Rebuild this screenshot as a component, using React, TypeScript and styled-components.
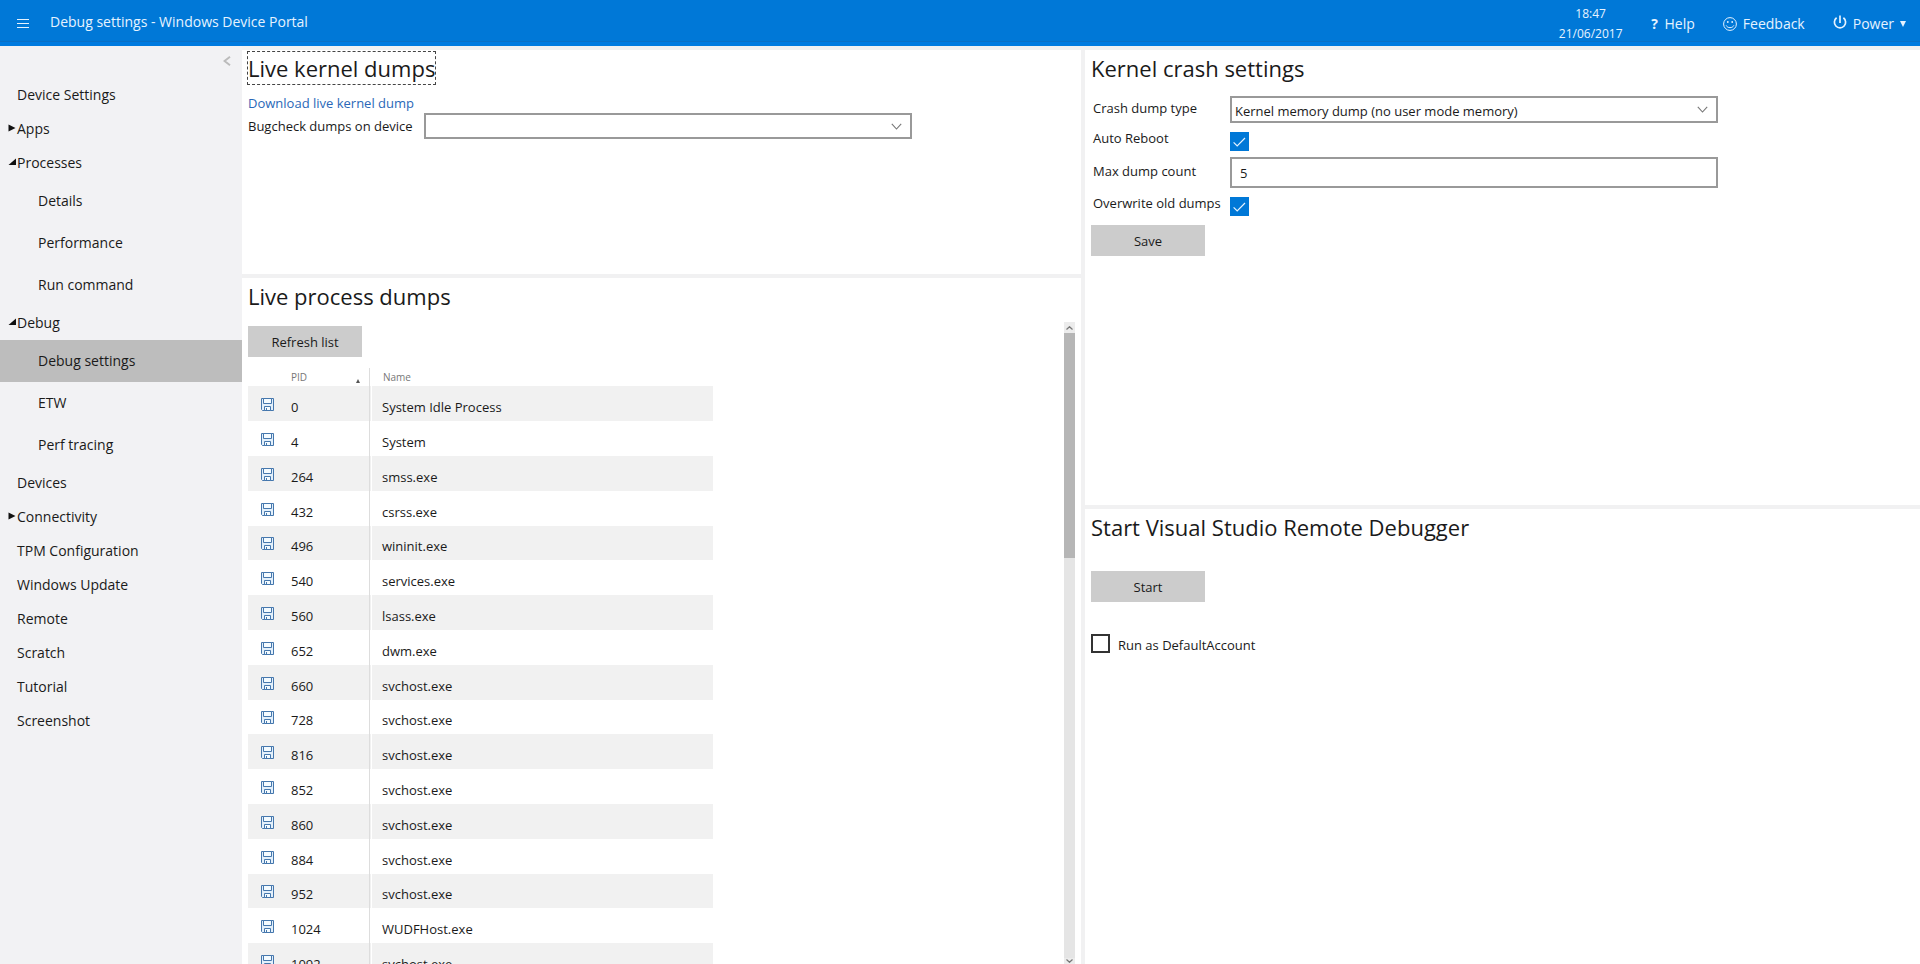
import React, { useId, useState } from 'react';
import styled, { createGlobalStyle } from 'styled-components';

const GlobalStyle = createGlobalStyle`
  *, *::before, *::after { box-sizing: border-box; }
  body {
    margin: 0;
    background: #fff;
    color: #1a1a1a;
    font-family: "Open Sans", "Noto Sans", sans-serif;
    font-size: 13px;
    line-height: 20px;
  }
  button, input, select { font: inherit; color: inherit; }
`;

const Page = styled.div`
  display: flex;
  flex-direction: column;
  height: 100vh;
  overflow: hidden;
`;

/* ---------- header ---------- */

const Header = styled.header`
  flex: none;
  padding-bottom: 4px;
  background: #007be0;
`;

const HeaderBar = styled.div`
  display: flex;
  align-items: center;
  height: 42px;
  padding: 0 14px 0 17px;
  border-bottom: 1px solid #0a70c6;
  background: #0078d7;
  color: #e6f3ff;
  font-size: 14px;
`;

const IconButton = styled.button`
  display: flex;
  padding: 0;
  border: 0;
  background: none;
  cursor: pointer;
`;

const MenuButton = styled(IconButton)`
  margin: 6px 21px 0 0;
`;

const Title = styled.h1`
  flex: 1;
  margin: 0;
  padding-top: 2px;
  font-size: 14px;
  font-weight: 400;
`;

const HeaderTools = styled.div`
  display: flex;
  align-items: center;
  gap: 28px;
  padding-top: 7px;
`;

const Clock = styled.time`
  font-size: 12px;
  text-align: center;
`;

const ClockLine = styled.span`
  display: block;
`;

const ToolButton = styled(IconButton)`
  align-items: center;
  gap: 6px;
`;

const HelpMark = styled.b`
  width: 8px;
`;

/* ---------- sidebar ---------- */

const Body = styled.div`
  display: flex;
  flex: 1;
  min-height: 0;
`;

const Sidebar = styled.nav`
  flex: none;
  width: 242px;
  background: #f2f2f4;
  font-size: 14px;
`;

const CollapseRow = styled.div`
  display: flex;
  justify-content: flex-end;
  height: 32px;
  padding: 10px 11px 0 0;
`;

const NavList = styled.ul`
  margin: 0;
  padding: 0;
  list-style: none;
`;

const NavLink = styled.a<{ $sub?: boolean; $active?: boolean }>`
  display: flex;
  align-items: center;
  height: ${p => (p.$sub ? 42 : 34)}px;
  padding-left: ${p => (p.$sub ? 38 : 8)}px;
  background: ${p => (p.$active ? '#bdbdbd' : 'transparent')};
  color: inherit;
  text-decoration: none;
`;

const Marker = styled.span`
  display: flex;
  width: 9px;
  padding-bottom: 3px;
`;

/* ---------- panels ---------- */

const Main = styled.main`
  display: grid;
  flex: 1;
  grid-template-columns: 50% minmax(0, 1fr);
  column-gap: 4px;
  min-width: 0;
  padding-top: 4px;
  background: #f1f1f2;
`;

const LeftColumn = styled.div`
  display: grid;
  grid-template-rows: 224px minmax(0, 1fr);
  row-gap: 4px;
  min-height: 0;
`;

const RightColumn = styled.div`
  display: grid;
  grid-template-rows: 1fr 1fr;
  row-gap: 4px;
  min-height: 0;
`;

const Panel = styled.section`
  display: flex;
  flex-direction: column;
  align-items: flex-start;
  min-height: 0;
  padding: 2px 6px 0;
  background: #fff;
`;

const Heading = styled.h2<{ $focused?: boolean }>`
  margin: 0 0 10px;
  font-size: 22px;
  font-weight: 400;
  line-height: 32px;
  outline: ${p => (p.$focused ? '1px dashed #444' : 'none')};
`;

const DownloadLink = styled.a`
  color: #2a68b8;
  line-height: 19px;
  text-decoration: none;
`;

const BugcheckRow = styled.div`
  display: grid;
  grid-template-columns: 176px 1fr;
  align-items: center;
`;

const PushButton = styled.button`
  flex: none;
  width: 114px;
  height: 31px;
  padding: 0;
  border: 0;
  background: #ccc;
`;

/* ---------- form controls ---------- */

const SelectWrap = styled.span`
  display: grid;
  align-items: center;
  width: 488px;
  max-width: 100%;
  svg { grid-area: 1 / 1; justify-self: end; margin-right: 10px; pointer-events: none; }
`;

const SelectBox = styled.select<{ $tall?: boolean }>`
  grid-area: 1 / 1;
  width: 100%;
  height: ${p => (p.$tall ? 27 : 26)}px;
  padding: 3px 28px 0 3px;
  border: 2px solid #999;
  border-radius: 0;
  background: #fff;
  appearance: none;
`;

const TextInput = styled.input`
  width: 488px;
  max-width: 100%;
  height: 31px;
  padding: 1px 8px 0;
  border: 2px solid #999;
  border-radius: 0;
  background: #fff;
`;

const CheckWrap = styled.span`
  display: grid;
  width: 19px;
  height: 19px;
  svg { grid-area: 1 / 1; place-self: center; pointer-events: none; }
`;

const CheckInput = styled.input`
  grid-area: 1 / 1;
  width: 19px;
  height: 19px;
  margin: 0;
  border: 2px solid #333;
  background: #fff;
  appearance: none;
  &:checked { border-color: #0078d7; background: #0078d7; }
`;

const SettingsGrid = styled.div`
  display: grid;
  grid-template-columns: 137px minmax(0, 488px);
  align-items: center;
  row-gap: 5px;
  padding: 2px 0 8px 2px;
`;

const SettingLabel = styled.label`
  padding-bottom: 4px;
`;

const CheckCell = styled.div`
  padding: 4px 0 1px;
`;

const StartBlock = styled.div`
  padding-top: 18px;
`;

const RunAsRow = styled.div`
  display: flex;
  align-items: center;
  gap: 8px;
  padding-top: 30px;
`;

const RunAsLabel = styled.label`
  padding-top: 3px;
`;

/* ---------- process table ---------- */

const ScrollArea = styled.div`
  display: flex;
  flex: 1;
  width: 100%;
  min-height: 0;
`;

const ScrollContent = styled.div`
  flex: 1;
  padding-top: 4px;
  overflow: hidden;
`;

const Table = styled.table`
  width: 465px;
  margin-top: 11px;
  border-spacing: 0;
  table-layout: fixed;
`;

const IconCol = styled.col`width: 43px;`;
const PidCol = styled.col`width: 79px;`;

const HeadRow = styled.tr`
  height: 18px;
  color: #777;
  font-size: 10px;
  line-height: 18px;
`;

const HeadCell = styled.th<{ $kind?: 'pid' | 'name' }>`
  padding: 0 0 0 ${p => (p.$kind === 'name' ? 13 : 0)}px;
  border-right: ${p => (p.$kind === 'pid' ? '1px solid #ddd' : '0')};
  font-weight: 400;
  text-align: left;
`;

const SortHead = styled.div`
  display: flex;
  align-items: center;
  justify-content: space-between;
  padding-right: 9px;
  svg { margin-top: 8px; }
`;

const ProcessRow = styled.tr`
  height: 35px;
  &:nth-child(odd) { background: #f1f1f1; }
  &:nth-child(5n) { height: 34px; }
`;

const IconCell = styled.td`
  padding: 2px 0 0 13px;
`;

const PidCell = styled.td`
  padding: 6px 0 0;
  border-right: 1px solid #ddd;
`;

const NameCell = styled.td`
  padding: 6px 0 0 12px;
  background: linear-gradient(#fff, #fff) 1px 0 / 1px 100% no-repeat;
`;

const Scrollbar = styled.div`
  display: flex;
  flex: none;
  flex-direction: column;
  width: 11px;
  background: #e5e5e5;
`;

const ScrollArrow = styled.button<{ $end?: boolean }>`
  display: flex;
  flex: none;
  align-items: center;
  justify-content: center;
  height: ${p => (p.$end ? 6 : 11)}px;
  padding: 0;
  border: 0;
  background: #ececec;
`;

const ScrollTrack = styled.div`
  flex: 1;
`;

const ScrollThumb = styled.div`
  height: 36%;
  background: #b6b6b6;
`;

/* ---------- icons ---------- */

const MenuIcon = () => (
  <svg width="12" height="9" viewBox="0 0 12 9" fill="#e6f3ff">
    <path d="M0 0h12v1H0zM0 4h12v1H0zM0 8h12v1H0z" />
  </svg>
);

const SmileIcon = () => (
  <svg width="14" height="14" viewBox="0 0 14 14" fill="none" stroke="#e6f3ff" strokeWidth="1">
    <circle cx="7" cy="7" r="6.4" />
    <path d="M3.2 8.4c1.1 3 6.5 3 7.6 0" />
    <circle cx="4.8" cy="5" r="0.9" fill="#e6f3ff" stroke="none" />
    <circle cx="9.2" cy="5" r="0.9" fill="#e6f3ff" stroke="none" />
  </svg>
);

const PowerIcon = () => (
  <svg width="14" height="18" viewBox="0 0 14 18" fill="none" stroke="#e6f3ff" strokeWidth="1.7">
    <path d="M7 0.5v7.5M3.6 2.8a5.6 5.6 0 1 0 6.8 0" />
  </svg>
);

const CaretIcon = () => (
  <svg width="6" height="6" viewBox="0 0 6 6" fill="#e6f3ff">
    <path d="M0 0h6L3 6z" />
  </svg>
);

const CollapseIcon = () => (
  <svg width="8" height="10" viewBox="0 0 8 10" fill="none" stroke="#bbb" strokeWidth="2">
    <path d="M7 0.8L1.5 5L7 9.2" />
  </svg>
);

const ClosedIcon = () => (
  <svg width="8" height="8" viewBox="0 0 8 8" fill="#111"><path d="M0.5 0.5v7L7.5 4z" /></svg>
);

const OpenIcon = () => (
  <svg width="8" height="8" viewBox="0 0 8 8" fill="#111"><path d="M8 0.5v6.5H0.5z" /></svg>
);

const ChevronIcon = () => (
  <svg width="11" height="7" viewBox="0 0 11 7" fill="none" stroke="#777" strokeWidth="1.1">
    <path d="M0.8 0.8L5.5 6L10.2 0.8" />
  </svg>
);

const TickIcon = () => (
  <svg width="13" height="10" viewBox="0 0 13 10" fill="none" stroke="#e6f3ff" strokeWidth="1.2">
    <path d="M0.6 5.4L4.2 9L12 1" />
  </svg>
);

const SortIcon = () => (
  <svg width="4" height="4" viewBox="0 0 4 4" fill="#555"><path d="M2 0L4 4H0z" /></svg>
);

const SaveIcon = () => (
  <svg width="13" height="14" viewBox="0 0 13 14" fill="none" stroke="#4577ad" strokeWidth="1">
    <path d="M0.5 0.5h12v12h-11l-1-1z" fill="#e3f0fb" />
    <path d="M2.5 0.5v5h8v-5z" fill="#f4fbff" />
    <path d="M3.5 12.5v-4h6v4z" fill="#f4fbff" />
    <path d="M5.5 10v2.5" />
  </svg>
);

const ArrowIcon = ({ down }: { down?: boolean }) => (
  <svg width="7" height="4" viewBox="0 0 7 4" fill="none" stroke="#777" strokeWidth="1.2">
    <path d={down ? 'M0.5 0.5L3.5 3.3L6.5 0.5' : 'M0.5 3.5L3.5 0.7L6.5 3.5'} />
  </svg>
);

/* ---------- data ---------- */

type NavItem = { label: string; state?: 'open' | 'closed'; sub?: boolean };

const navItems: NavItem[] = [
  { label: 'Device Settings' },
  { label: 'Apps', state: 'closed' },
  { label: 'Processes', state: 'open' },
  { label: 'Details', sub: true },
  { label: 'Performance', sub: true },
  { label: 'Run command', sub: true },
  { label: 'Debug', state: 'open' },
  { label: 'Debug settings', sub: true },
  { label: 'ETW', sub: true },
  { label: 'Perf tracing', sub: true },
  { label: 'Devices' },
  { label: 'Connectivity', state: 'closed' },
  { label: 'TPM Configuration' },
  { label: 'Windows Update' },
  { label: 'Remote' },
  { label: 'Scratch' },
  { label: 'Tutorial' },
  { label: 'Screenshot' },
];

const processes: [number, string][] = [
  [0, 'System Idle Process'],
  [4, 'System'],
  [264, 'smss.exe'],
  [432, 'csrss.exe'],
  [496, 'wininit.exe'],
  [540, 'services.exe'],
  [560, 'lsass.exe'],
  [652, 'dwm.exe'],
  [660, 'svchost.exe'],
  [728, 'svchost.exe'],
  [816, 'svchost.exe'],
  [852, 'svchost.exe'],
  [860, 'svchost.exe'],
  [884, 'svchost.exe'],
  [952, 'svchost.exe'],
  [1024, 'WUDFHost.exe'],
  [1092, 'svchost.exe'],
];

/* ---------- components ---------- */

function Checkbox({ id, initial = false }: { id: string; initial?: boolean }) {
  const [on, setOn] = useState(initial);
  return (
    <CheckWrap>
      <CheckInput id={id} type="checkbox" checked={on} onChange={e => setOn(e.target.checked)} />
      {on && <TickIcon />}
    </CheckWrap>
  );
}

function TopBar() {
  return (
    <Header>
      <HeaderBar>
        <MenuButton aria-label="Menu"><MenuIcon /></MenuButton>
        <Title>Debug settings - Windows Device Portal</Title>
        <HeaderTools>
          <Clock dateTime="2017-06-21T18:47">
            <ClockLine>18:47</ClockLine>
            <ClockLine>21/06/2017</ClockLine>
          </Clock>
          <ToolButton><HelpMark>?</HelpMark>Help</ToolButton>
          <ToolButton><SmileIcon />Feedback</ToolButton>
          <ToolButton><PowerIcon />Power<CaretIcon /></ToolButton>
        </HeaderTools>
      </HeaderBar>
    </Header>
  );
}

function SideNav() {
  return (
    <Sidebar>
      <CollapseRow>
        <IconButton aria-label="Collapse"><CollapseIcon /></IconButton>
      </CollapseRow>
      <NavList>
        {navItems.map(item => (
          <li key={item.label}>
            <NavLink href="#" $sub={item.sub} $active={item.label === 'Debug settings'}>
              {!item.sub && (
                <Marker>
                  {item.state === 'open' && <OpenIcon />}
                  {item.state === 'closed' && <ClosedIcon />}
                </Marker>
              )}
              {item.label}
            </NavLink>
          </li>
        ))}
      </NavList>
    </Sidebar>
  );
}

function KernelDumps() {
  const id = useId();
  return (
    <Panel>
      <Heading $focused>Live kernel dumps</Heading>
      <DownloadLink href="#">Download live kernel dump</DownloadLink>
      <BugcheckRow>
        <label htmlFor={id}>Bugcheck dumps on device</label>
        <SelectWrap>
          <SelectBox id={id} />
          <ChevronIcon />
        </SelectWrap>
      </BugcheckRow>
    </Panel>
  );
}

function ProcessDumps() {
  return (
    <Panel>
      <Heading>Live process dumps</Heading>
      <ScrollArea>
        <ScrollContent>
          <PushButton>Refresh list</PushButton>
          <Table>
            <colgroup><IconCol /><PidCol /><col /></colgroup>
            <thead>
              <HeadRow>
                <HeadCell />
                <HeadCell $kind="pid"><SortHead>PID<SortIcon /></SortHead></HeadCell>
                <HeadCell $kind="name">Name</HeadCell>
              </HeadRow>
            </thead>
            <tbody>
              {processes.map(([pid, name]) => (
                <ProcessRow key={pid}>
                  <IconCell><IconButton aria-label="Save"><SaveIcon /></IconButton></IconCell>
                  <PidCell>{pid}</PidCell>
                  <NameCell>{name}</NameCell>
                </ProcessRow>
              ))}
            </tbody>
          </Table>
        </ScrollContent>
        <Scrollbar>
          <ScrollArrow aria-label="Scroll up"><ArrowIcon /></ScrollArrow>
          <ScrollTrack><ScrollThumb /></ScrollTrack>
          <ScrollArrow aria-label="Scroll down" $end><ArrowIcon down /></ScrollArrow>
        </Scrollbar>
      </ScrollArea>
    </Panel>
  );
}

function CrashSettings() {
  const id = useId();
  return (
    <Panel>
      <Heading>Kernel crash settings</Heading>
      <SettingsGrid>
        <SettingLabel htmlFor={id + 'type'}>Crash dump type</SettingLabel>
        <SelectWrap>
          <SelectBox id={id + 'type'} $tall>
            <option>Kernel memory dump (no user mode memory)</option>
          </SelectBox>
          <ChevronIcon />
        </SelectWrap>
        <SettingLabel htmlFor={id + 'reboot'}>Auto Reboot</SettingLabel>
        <CheckCell><Checkbox id={id + 'reboot'} initial /></CheckCell>
        <SettingLabel htmlFor={id + 'count'}>Max dump count</SettingLabel>
        <TextInput id={id + 'count'} defaultValue="5" />
        <SettingLabel htmlFor={id + 'overwrite'}>Overwrite old dumps</SettingLabel>
        <CheckCell><Checkbox id={id + 'overwrite'} initial /></CheckCell>
      </SettingsGrid>
      <PushButton>Save</PushButton>
    </Panel>
  );
}

function RemoteDebugger() {
  const id = useId();
  return (
    <Panel>
      <Heading>Start Visual Studio Remote Debugger</Heading>
      <StartBlock>
        <PushButton>Start</PushButton>
        <RunAsRow>
          <Checkbox id={id} />
          <RunAsLabel htmlFor={id}>Run as DefaultAccount</RunAsLabel>
        </RunAsRow>
      </StartBlock>
    </Panel>
  );
}

export default function App() {
  return (
    <Page>
      <GlobalStyle />
      <TopBar />
      <Body>
        <SideNav />
        <Main>
          <LeftColumn>
            <KernelDumps />
            <ProcessDumps />
          </LeftColumn>
          <RightColumn>
            <CrashSettings />
            <RemoteDebugger />
          </RightColumn>
        </Main>
      </Body>
    </Page>
  );
}
